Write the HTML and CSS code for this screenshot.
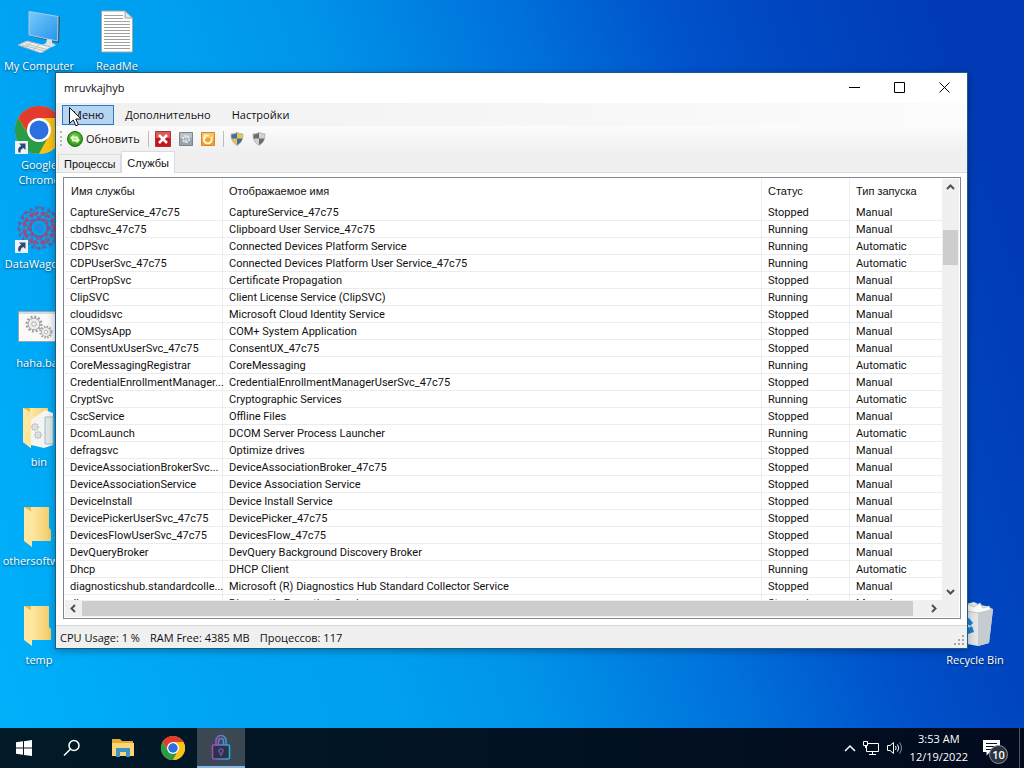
FILE: index.html
```html
<!DOCTYPE html>
<html lang="ru">
<head>
  <meta charset="UTF-8">
  <meta name="viewport" content="width=device-width, initial-scale=1.0">
  <title>mruvkajhyb</title>
  <link rel="stylesheet" href="styles.css">
</head>
<body>
  <!-- shared icon shapes -->
  <svg class="defs" width="0" height="0">
    <defs>
      <linearGradient id="screen" x1="0" y1="0" x2="1" y2="1">
        <stop offset="0" stop-color="#7cc9fb"/>
        <stop offset="1" stop-color="#2196ec"/>
      </linearGradient>
      <linearGradient id="fold" x1="0" y1="0" x2="1" y2="0">
        <stop offset="0" stop-color="#ffe9a6"/>
        <stop offset="1" stop-color="#f2cb66"/>
      </linearGradient>
      <linearGradient id="lockline" gradientUnits="userSpaceOnUse" x1="0" y1="0" x2="20" y2="0">
        <stop offset="0" stop-color="#b53fb4"/>
        <stop offset="1" stop-color="#1fb5dc"/>
      </linearGradient>
      <radialGradient id="green" cx="0.5" cy="0.4" r="0.6">
        <stop offset="0" stop-color="#8fe04a"/>
        <stop offset="1" stop-color="#1d8a12"/>
      </radialGradient>
      <symbol id="chrome" viewBox="0 0 48 48">
        <circle cx="24" cy="24" r="24" fill="#fbc116"/>
        <path d="M3.2 12A24 24 0 0 1 44.8 12L24 13L14.5 29.5Z" fill="#e33b2e"/>
        <path d="M3.2 12A24 24 0 0 0 24 48L34 29.5L14 29.5Z" fill="#2a9c48"/>
        <path d="M24 48A24 24 0 0 0 44.8 12H24L34.4 30Z" fill="#fbc116"/>
        <circle cx="24" cy="24" r="12" fill="#fff"/>
        <circle cx="24" cy="24" r="9.5" fill="#2b6fe0"/>
      </symbol>
      <symbol id="folder" viewBox="0 0 32 42">
        <path d="M1 1H26V22L28 24V35H10Z" fill="#e9bb51"/>
        <path d="M8 1H26V22L28 25V35H9Z" fill="url(#fold)"/>
        <path d="M1 1L9 6V41L1 35Z" fill="#ffe7a0"/>
      </symbol>
      <symbol id="shortcut" viewBox="0 0 13 13">
        <path d="M0 0H13V13H0Z" fill="#eef2f6"/>
        <path d="M4 2.5H10.5V9L8.500 7Q5 8.500 5.500 11.500H3.500Q2 7 6.200 4.800Z" fill="#2c4a78"/>
      </symbol>
      <symbol id="gear" viewBox="0 0 20 20">
        <circle cx="10" cy="10" r="8" fill="none" stroke="#a2a2a2" stroke-width="3" stroke-dasharray="2.200 2"/>
        <circle cx="10" cy="10" r="6.500" fill="#eee" stroke="#a2a2a2"/>
        <circle cx="10" cy="10" r="2.500" fill="#fafafa" stroke="#a2a2a2"/>
      </symbol>
    </defs>
  </svg>

  <main class="desktop">
    <a class="shortcut my-computer" href="#">
      <svg width="44" height="46" viewBox="0 0 44 46">
        <path d="M13 5L43 10L42 36L13 29Z" fill="#35536b" />
        <path d="M12 4.500L41 9.500L40.500 34L12 28Z" fill="url(#screen)" stroke="#a9cde4"/>
        <path d="M30 32L35 33V36L39 38L33 41L25 38L29 36Z" fill="#dbe3e8"/>
        <path d="M1 38L10 34L34 40L24 46Z" fill="#f1f1f0" stroke="#a9b6bd"/>
        <path d="M5 38L28 44M8 36.500L30 42.500M8 40.500L15 35M16 43L23 37" stroke="#b5bec3"/>
      </svg>
      <span>My Computer</span>
    </a>
    <a class="shortcut readme" href="#">
      <svg width="34" height="46" viewBox="0 0 34 46">
        <path d="M1.500 4H25L32.500 11V45H1.500Z" fill="#fff" stroke="#a5a5a5"/>
        <path d="M25 4V11H32.500Z" fill="#dfe6ec" stroke="#9aa5ad"/>
        <path d="M4 8.500H23M4 11.500H23M4 14.500H30M4 17.500H30M4 20.500H30M4 23.500H30M4 26.500H30M4 29.500H30M4 32.500H30M4 35.500H30M4 38.500H30M4 41.500H30" stroke="#a0a0a0"/>
      </svg>
      <span>ReadMe</span>
    </a>
    <a class="shortcut google" href="#">
      <svg width="50" height="50" viewBox="0 0 50 50">
        <use href="#chrome" x="1" y="1" width="48" height="48"/>
        <use href="#shortcut" x="1" y="36" width="13" height="13"/>
      </svg>
      <span>Google<br>Chrome</span>
    </a>
    <a class="shortcut datawagon" href="#">
      <svg width="50" height="50" viewBox="0 0 50 50">
        <g fill="none" stroke="#4f68ae">
          <circle cx="25" cy="24" r="20" stroke-width="3" stroke-dasharray="3 3"/>
          <circle cx="25" cy="24" r="15" stroke="#a44b75" stroke-dasharray="4 2" stroke-width="3"/>
          <circle cx="25" cy="24" r="9" stroke="#8a5088" stroke-dasharray="3 2" stroke-width="3"/>
          <ellipse cx="25" cy="24" rx="21" ry="8" stroke="#8a5088"/>
          <ellipse cx="25" cy="24" rx="21" ry="8" stroke="#8a5088" transform="rotate(45 25 24)"/>
          <ellipse cx="25" cy="24" rx="21" ry="8" stroke="#8a5088" transform="rotate(90 25 24)"/>
          <ellipse cx="25" cy="24" rx="21" ry="8" stroke="#8a5088" transform="rotate(135 25 24)"/>
        </g>
        <circle cx="25" cy="24" r="5" fill="#1c8fe0"/>
        <use href="#shortcut" x="1" y="36" width="13" height="13"/>
      </svg>
      <span>DataWagon...</span>
    </a>
    <a class="shortcut haha" href="#">
      <svg width="42" height="32" viewBox="0 0 42 32">
        <path d="M0.500 0.500H41.500V30.500H0.500Z" fill="#fafafa" stroke="#9ba5ab"/>
        <path d="M1 1H41V3H1Z" fill="#d3dce2"/>
        <use href="#gear" x="7" y="4" width="18" height="18"/>
        <use href="#gear" x="21" y="14" width="14" height="14"/>
      </svg>
      <span>haha.bat</span>
    </a>
    <a class="shortcut bin" href="#">
      <svg width="34" height="42" viewBox="0 0 34 42">
        <use href="#folder" width="32" height="42"/>
        <path d="M9 13L23 3L31 6V38L22 41L9 38Z" fill="#f4f4f2"/>
        <path d="M23 10H31V37H23Z" fill="#dbe7e8" stroke="#a9b9bd"/>
        <use href="#gear" x="9" y="16" width="8" height="8"/>
        <use href="#gear" x="12" y="24" width="8" height="8"/>
        <path d="M1 1L9 6V41L1 35Z" fill="#ffe7a0"/>
      </svg>
      <span>bin</span>
    </a>
    <a class="shortcut othersoftware" href="#">
      <svg width="32" height="42"><use href="#folder" width="32" height="42"/></svg>
      <span>othersoftware</span>
    </a>
    <a class="shortcut temp" href="#">
      <svg width="32" height="42"><use href="#folder" width="32" height="42"/></svg>
      <span>temp</span>
    </a>
    <a class="shortcut recycle" href="#">
      <svg width="38" height="46" viewBox="0 0 38 46">
        <path d="M2 6L10 3L18 1L24 4L30 5L37 8L33 42L22 45L6 42Z" fill="#e4e7e8"/>
        <path d="M22 11L37 8L33 42L22 45Z" fill="#c6cbcf"/>
        <path d="M5 9L12 3L18 6L24 2L27 7L33 5L35 9L22 12Z" fill="#fafafa" stroke="#bfc6cb"/>
        <path d="M8 20L13 17L17 22L14 25ZM8 25L13 26L11 33L8 32ZM11 28L16 25L18 31L12 33Z" fill="#1a7fd4"/>
      </svg>
      <span>Recycle Bin</span>
    </a>

    <section class="window">
      <header class="titlebar">
        <h1>mruvkajhyb</h1>
        <div class="caption">
          <button aria-label="Minimize"><svg width="11" height="11"><path d="M0 5.500H11" stroke="#000"/></svg></button>
          <button aria-label="Maximize"><svg width="11" height="11"><path d="M0.500 0.500H10.500V10.500H0.500Z" fill="none" stroke="#000"/></svg></button>
          <button aria-label="Close"><svg width="11" height="11"><path d="M0.500 0.500L10.500 10.500M10.500 0.500L0.500 10.500" stroke="#000"/></svg></button>
        </div>
      </header>

      <nav class="menubar">
        <button class="active">Меню</button>
        <button>Дополнительно</button>
        <button>Настройки</button>
      </nav>

      <div class="toolbar">
        <span class="grip"></span>
        <button class="refresh">
          <svg width="16" height="16" viewBox="0 0 16 16">
            <circle cx="8" cy="8" r="7.500" fill="url(#green)" stroke="#1c7312"/>
            <path d="M3 7L6.500 3.500V5.500H10.500L11.500 7.500H6.500V9.500ZM13 9L9.500 12.500V10.500H5.500L4.500 8.500H9.500V6.500Z" fill="#eaffd8"/>
          </svg>
          Обновить
        </button>
        <span class="sep"></span>
        <button aria-label="Остановить">
          <svg width="16" height="16" viewBox="0 0 16 16">
            <path d="M0.500 0.500H15.500V15.500H0.500Z" fill="#c4161c" stroke="#a33"/>
            <path d="M1 1H15V7H1Z" fill="#dc5a58"/>
            <path d="M4 4L12 12M12 4L4 12" stroke="#fff" stroke-width="2.500"/>
          </svg>
        </button>
        <button aria-label="Служба">
          <svg width="14" height="14" viewBox="0 0 14 14">
            <path d="M0.500 0.500H13.500V13.500H0.500Z" fill="#9aa4ae" stroke="#7b838b"/>
            <path d="M1 1H13V6H1Z" fill="#b9c1c8"/>
            <circle cx="7" cy="7" r="3" fill="none" stroke="#e6eaee" stroke-width="2" stroke-dasharray="2 1"/>
            <path d="M7 3V11" stroke="#e6eaee"/>
          </svg>
        </button>
        <button aria-label="Перезапустить">
          <svg width="14" height="14" viewBox="0 0 14 14">
            <path d="M0.500 0.500H13.500V13.500H0.500Z" fill="#f0a22d" stroke="#cf8a2b"/>
            <path d="M1 1H13V6H1Z" fill="#f7c365"/>
            <path d="M4.500 4A4 4 0 1 0 10 5M4 7V3.500H8" fill="none" stroke="#fff3d0" stroke-width="2"/>
          </svg>
        </button>
        <span class="sep"></span>
        <button aria-label="Права администратора">
          <svg width="14" height="14" viewBox="0 0 14 14">
            <path d="M7 0.500Q10 2 13 2Q13 10 7 13.500Q1 10 1 2Q4 2 7 0.500Z" fill="#e9c34a" stroke="#b5b5ae"/>
            <path d="M7 1Q4 2.500 1.500 2.500V6.500H7ZM7 6.500H12.500Q11 11 7 13Z" fill="#3d6fa8"/>
          </svg>
        </button>
        <button aria-label="Обычные права">
          <svg width="14" height="14" viewBox="0 0 14 14">
            <path d="M7 0.500Q10 2 13 2Q13 10 7 13.500Q1 10 1 2Q4 2 7 0.500Z" fill="#d2d2d2" stroke="#b5b5b5"/>
            <path d="M7 1Q4 2.500 1.500 2.500V6.500H7ZM7 6.500H12.500Q11 11 7 13Z" fill="#6c6c6c"/>
          </svg>
        </button>
      </div>

      <div class="tabs">
        <button>Процессы</button>
        <button class="selected">Службы</button>
      </div>

      <div class="panel">
        <div class="list">
          <div class="rows">
            <table>
              <colgroup>
                <col class="c-name"><col><col class="c-status"><col class="c-start">
              </colgroup>
              <thead>
                <tr><th>Имя службы</th><th>Отображаемое имя</th><th>Статус</th><th>Тип запуска</th></tr>
              </thead>
              <tbody>
                <tr><td>CaptureService_47c75</td><td>CaptureService_47c75</td><td>Stopped</td><td>Manual</td></tr>
                <tr><td>cbdhsvc_47c75</td><td>Clipboard User Service_47c75</td><td>Running</td><td>Manual</td></tr>
                <tr><td>CDPSvc</td><td>Connected Devices Platform Service</td><td>Running</td><td>Automatic</td></tr>
                <tr><td>CDPUserSvc_47c75</td><td>Connected Devices Platform User Service_47c75</td><td>Running</td><td>Automatic</td></tr>
                <tr><td>CertPropSvc</td><td>Certificate Propagation</td><td>Stopped</td><td>Manual</td></tr>
                <tr><td>ClipSVC</td><td>Client License Service (ClipSVC)</td><td>Running</td><td>Manual</td></tr>
                <tr><td>cloudidsvc</td><td>Microsoft Cloud Identity Service</td><td>Stopped</td><td>Manual</td></tr>
                <tr><td>COMSysApp</td><td>COM+ System Application</td><td>Stopped</td><td>Manual</td></tr>
                <tr><td>ConsentUxUserSvc_47c75</td><td>ConsentUX_47c75</td><td>Stopped</td><td>Manual</td></tr>
                <tr><td>CoreMessagingRegistrar</td><td>CoreMessaging</td><td>Running</td><td>Automatic</td></tr>
                <tr><td>CredentialEnrollmentManager...</td><td>CredentialEnrollmentManagerUserSvc_47c75</td><td>Stopped</td><td>Manual</td></tr>
                <tr><td>CryptSvc</td><td>Cryptographic Services</td><td>Running</td><td>Automatic</td></tr>
                <tr><td>CscService</td><td>Offline Files</td><td>Stopped</td><td>Manual</td></tr>
                <tr><td>DcomLaunch</td><td>DCOM Server Process Launcher</td><td>Running</td><td>Automatic</td></tr>
                <tr><td>defragsvc</td><td>Optimize drives</td><td>Stopped</td><td>Manual</td></tr>
                <tr><td>DeviceAssociationBrokerSvc...</td><td>DeviceAssociationBroker_47c75</td><td>Stopped</td><td>Manual</td></tr>
                <tr><td>DeviceAssociationService</td><td>Device Association Service</td><td>Stopped</td><td>Manual</td></tr>
                <tr><td>DeviceInstall</td><td>Device Install Service</td><td>Stopped</td><td>Manual</td></tr>
                <tr><td>DevicePickerUserSvc_47c75</td><td>DevicePicker_47c75</td><td>Stopped</td><td>Manual</td></tr>
                <tr><td>DevicesFlowUserSvc_47c75</td><td>DevicesFlow_47c75</td><td>Stopped</td><td>Manual</td></tr>
                <tr><td>DevQueryBroker</td><td>DevQuery Background Discovery Broker</td><td>Stopped</td><td>Manual</td></tr>
                <tr><td>Dhcp</td><td>DHCP Client</td><td>Running</td><td>Automatic</td></tr>
                <tr><td>diagnosticshub.standardcolle...</td><td>Microsoft (R) Diagnostics Hub Standard Collector Service</td><td>Stopped</td><td>Manual</td></tr>
                <tr><td>diagsvc</td><td>Diagnostic Execution Service</td><td>Stopped</td><td>Manual</td></tr>
              </tbody>
            </table>
          </div>
          <div class="vscroll">
            <svg width="9" height="6"><path d="M1 5L4.500 1.500L8 5" fill="none" stroke="#505050" stroke-width="2"/></svg>
            <div class="vtrack"><div class="vthumb"></div></div>
            <svg width="9" height="6"><path d="M1 1L4.500 4.500L8 1" fill="none" stroke="#505050" stroke-width="2"/></svg>
          </div>
          <div class="hscroll">
            <svg width="6" height="9"><path d="M5 1L1.500 4.500L5 8" fill="none" stroke="#505050" stroke-width="2"/></svg>
            <div class="hthumb"></div>
            <svg width="6" height="9"><path d="M1 1L4.500 4.500L1 8" fill="none" stroke="#505050" stroke-width="2"/></svg>
          </div>
        </div>
      </div>

      <footer class="statusbar">
        <span>CPU Usage: 1 %</span>
        <span>RAM Free: 4385 MB</span>
        <span>Процессов: 117</span>
        <svg class="resize" width="11" height="11"><path d="M8 0H10V2H8ZM4 4H6V6H4ZM8 4H10V6H8ZM0 8H2V10H0ZM4 8H6V10H4ZM8 8H10V10H8Z" fill="#a8a8a8"/></svg>
      </footer>
    </section>

    <svg class="cursor" width="13" height="20" viewBox="0 0 13 20">
      <path d="M0.500 0.500V16.500L4.300 13L6.800 18.800L9.300 17.700L6.800 12H12Z" fill="#fff" stroke="#111"/>
    </svg>
  </main>

  <footer class="taskbar">
    <button aria-label="Start">
      <svg width="16" height="16" viewBox="0 0 16 16"><path d="M0 2.300L7 1.300V7.600H0ZM8 1.200L16 0V7.600H8ZM0 8.500H7V14.700L0 13.700ZM8 8.500H16V16L8 14.900Z" fill="#fff"/></svg>
    </button>
    <button aria-label="Search">
      <svg width="18" height="18" viewBox="0 0 18 18"><circle cx="11" cy="6.500" r="5" fill="none" stroke="#fff" stroke-width="1.500"/><path d="M7.300 10.200L1 16.500" stroke="#fff" stroke-width="1.500"/></svg>
    </button>
    <button class="explorer" aria-label="File Explorer">
      <svg width="22" height="18" viewBox="0 0 22 18">
        <path d="M0 0H8L10 2H21V17H0Z" fill="#e5a83b"/>
        <path d="M0 4H22V17H0Z" fill="#fcd673"/>
        <path d="M4 9H18V18H14V13H8V18H4Z" fill="#3f93c9"/>
      </svg>
    </button>
    <button aria-label="Google Chrome">
      <svg width="24" height="24"><use href="#chrome" width="24" height="24"/></svg>
    </button>
    <button class="running" aria-label="mruvkajhyb">
      <svg width="20" height="26" viewBox="0 0 20 26" fill="none" stroke="url(#lockline)" stroke-width="1.500">
        <path d="M5 11V6.500A5 5 0 0 1 15 6.500V11"/>
        <path d="M7.500 11V7A2.500 2.500 0 0 1 12.500 7V11"/>
        <path d="M2.500 11H17.500Q18.500 11 18.500 12V23Q18.500 25 16.500 25H3.500Q1.500 25 1.500 23V12Q1.500 11 2.500 11Z" fill="#27344a"/>
        <path d="M10 21L8 17A2 2 0 1 1 12 17Z" stroke="#75509c"/>
      </svg>
    </button>
    <div class="tray">
      <svg width="12" height="8"><path d="M1 7L6 2L11 7" fill="none" stroke="#fff" stroke-width="1.500"/></svg>
      <svg width="17" height="14" viewBox="0 0 17 14" fill="none" stroke="#fff">
        <path d="M5 2.500H15.500V10.500H3.500V5M9.500 10.500V13.500M6 13.500H13M0.500 0.500H4.500V4.500H0.500ZM2.500 4.500V7"/>
      </svg>
      <svg width="16" height="14" viewBox="0 0 16 14" fill="none" stroke="#fff">
        <path d="M0.500 4.500H3L6.500 1.500V12.500L3 9.500H0.500Z"/>
        <path d="M8.500 5Q9.800 7 8.500 9M10.500 3.500Q13 7 10.500 10.500"/>
        <path d="M12.500 1.500Q16.500 7 12.500 12.500" stroke="#8b929c"/>
      </svg>
      <time>3:53 AM<br>12/19/2022</time>
      <div class="notify">
        <svg width="17" height="16" viewBox="0 0 17 16"><path d="M0 0H17V12H7L3.500 15.500V12H0Z" fill="#fff"/><path d="M3 3.500H14M3 6.500H14M3 9.500H10" stroke="#05122a"/></svg>
        <span class="badge">10</span>
      </div>
    </div>
    <div class="peek"></div>
  </footer>
</body>
</html>
```
FILE: styles.css
```css
* {
  box-sizing: border-box;
}
body {
  margin: 0;
  height: 100vh;
  display: flex;
  flex-direction: column;
  overflow: hidden;
  font-family: "Open Sans", "Noto Sans", sans-serif;
  font-size: 11px;
  color: #111;
  background: linear-gradient(72deg, #00b2fb 0%, #00a3f2 20%, #009fef 33%, #0094ea 43%, #0070da 60%, #0052cb 72%, #0046c0 81%, #003ab4 94%);
}
svg {
  display: block;
  flex: none;
}
.defs {
  position: absolute;
}
button {
  font: inherit;
  color: inherit;
  background: none;
  border: none;
  margin: 0;
  padding: 0;
  display: flex;
  align-items: center;
  justify-content: center;
}

/* desktop */
.desktop {
  position: relative;
  flex: 1;
}
.shortcut {
  position: absolute;
  left: 0;
  width: 78px;
  display: flex;
  flex-direction: column;
  align-items: center;
  justify-content: flex-end;
  gap: 5px;
  color: #fff;
  line-height: 15px;
  text-align: center;
  text-decoration: none;
  text-shadow: 0 1px 2px rgba(0,0,0,0.6);
}
.my-computer { top: 7px; }
.readme { top: 7px; left: 78px; }
.google { top: 105px; }
.google, .datawagon { gap: 2px; }
.datawagon { top: 204px; }
.haha { top: 311px; gap: 12px; }
.bin { top: 407px; }
.othersoftware { top: 506px; }
.temp { top: 605px; }
.recycle { top: 601px; left: auto; right: 10px; }

/* application window */
.window {
  position: absolute;
  top: 72px;
  left: 55px;
  right: 56px;
  bottom: 79px;
  display: flex;
  flex-direction: column;
  background: #f0f0f0;
  border: 1px solid #1d5c86;
  box-shadow: 0 2px 8px rgba(0,0,0,0.3);
}
.titlebar {
  height: 30px;
  display: flex;
  justify-content: space-between;
  align-items: center;
  background: #fff;
  padding: 0 0 2px 8px;
}
.titlebar h1 {
  margin: 0;
  font-size: inherit;
  font-weight: normal;
}
.caption {
  display: flex;
}
.caption button {
  width: 45px;
  height: 28px;
}
.menubar {
  height: 23px;
  display: flex;
  align-items: center;
  gap: 1px;
  padding-left: 6px;
  background: linear-gradient(to right, #f0f0f0, #fcfcfc);
}
.menubar button {
  height: 20px;
  padding: 0 9px;
  border: 1px solid transparent;
}
.menubar .active {
  background: #b5d5f3;
  border-color: #2a78c8;
}
.toolbar {
  height: 25px;
  display: flex;
  align-items: center;
  gap: 8px;
  padding-left: 4px;
  background: linear-gradient(#fcfcfc, #f0f0f0);
}
.toolbar .grip {
  height: 15px;
  border-left: 2px dotted #b8b8b8;
}
.toolbar .refresh {
  gap: 3px;
  margin-left: -3px;
}
.toolbar .sep {
  width: 1px;
  height: 16px;
  margin-right: -2px;
  background: #bdbdbd;
}
.tabs {
  height: 22px;
  display: flex;
  align-items: flex-end;
  padding-left: 2px;
  border-bottom: 1px solid #dcdcdc;
  font-family: "Liberation Sans", sans-serif;
}
.tabs button {
  height: 18px;
  padding: 0 5px;
  border: 1px solid #dcdcdc;
  border-bottom: none;
}
.tabs .selected {
  height: 22px;
  margin-bottom: -1px;
  background: #fff;
}

/* service list */
.panel {
  flex: 1;
  min-height: 0;
  background: #fff;
  padding: 4px 6px 6px 7px;
}
.list {
  height: 100%;
  display: grid;
  grid-template-columns: 1fr 17px;
  grid-template-rows: 1fr 17px;
  border: 1px solid #828790;
  padding: 1px;
}
.rows {
  min-height: 0;
  overflow: hidden;
}
table {
  width: 100%;
  table-layout: fixed;
  border-collapse: separate;
  border-spacing: 0;
  font-family: "Liberation Sans", sans-serif;
}
.c-name { width: 158px; }
.c-status { width: 88px; }
.c-start { width: 92px; }
th, td {
  padding: 0 0 0 6px;
  text-align: left;
  font-weight: normal;
  white-space: nowrap;
  border-right: 1px solid #ececec;
}
th {
  height: 25px;
  padding-bottom: 2px;
}
td {
  height: 17px;
  padding-top: 1px;
  line-height: 15px;
  border-bottom: 1px solid #ececec;
  font-family: Roboto, sans-serif;
}
td:first-child {
  padding-left: 5px;
}
th:last-child, td:last-child {
  border-right: none;
}
.vscroll, .hscroll {
  display: flex;
  align-items: center;
  background: #f0f0f0;
}
.vscroll {
  flex-direction: column;
  padding: 5px 0;
}
.vtrack {
  flex: 1;
  align-self: stretch;
  padding: 40px 1px 0;
}
.vthumb {
  height: 35px;
  background: #cdcdcd;
}
.hscroll {
  grid-column: 1 / 3;
  padding: 0 22px 0 5px;
  gap: 6px;
}
.hthumb {
  flex: 1;
  height: 15px;
  margin-right: 12px;
  background: #cdcdcd;
}
.statusbar {
  height: 23px;
  display: flex;
  align-items: center;
  gap: 10px;
  padding: 0 2px 0 4px;
  border-top: 1px solid #d7d7d7;
}
.resize {
  margin-left: auto;
  align-self: flex-end;
  margin-bottom: 2px;
}
.cursor {
  position: absolute;
  left: 69px;
  top: 107px;
}

/* taskbar */
.taskbar {
  height: 40px;
  display: flex;
  background: linear-gradient(to right, #021a28, #020b1e);
}
.taskbar button {
  width: 48px;
}
.taskbar .explorer {
  width: 53px;
}
.taskbar .running {
  background: #3b4854;
  border-bottom: 2px solid #84b5e0;
}
.tray {
  margin-left: auto;
  display: flex;
  align-items: center;
  gap: 7px;
  color: #fff;
  padding-right: 11px;
}
.tray time {
  line-height: 18px;
  text-align: center;
}
.notify {
  position: relative;
  width: 25px;
  margin-left: 8px;
}
.badge {
  position: absolute;
  left: 6px;
  top: 5px;
  width: 19px;
  height: 19px;
  border: 1px solid #8b929c;
  border-radius: 50%;
  background: #2c333d;
  font-weight: 600;
  line-height: 17px;
  text-align: center;
}
.peek {
  width: 5px;
  border-left: 1px solid #4d5663;
}
```
